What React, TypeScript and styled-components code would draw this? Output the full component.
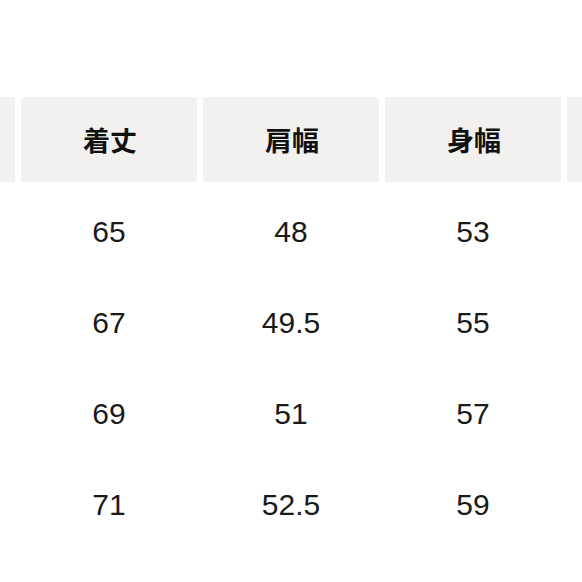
import styled, { createGlobalStyle } from 'styled-components'

const GlobalStyle = createGlobalStyle`
  html, body {
    margin: 0;
    padding: 0;
    background: #ffffff;
  }
  #root {
    width: 582px;
    height: 582px;
    overflow: hidden;
  }
`

const columns = ['', '着丈', '肩幅', '身幅', '']
const rows = [
  ['', '65', '48', '53', ''],
  ['', '67', '49.5', '55', ''],
  ['', '69', '51', '57', ''],
  ['', '71', '52.5', '59', ''],
]

function App() {
  return (
    <>
      <GlobalStyle />
      <Page>
        <Table>
          <HeaderRow>
            {columns.map((c, i) => (
              <HeaderCell key={i}>{c}</HeaderCell>
            ))}
          </HeaderRow>
          {rows.map((r, i) => (
            <DataRow key={i}>
              {r.map((v, j) => (
                <DataCell key={j}>{v}</DataCell>
              ))}
            </DataRow>
          ))}
        </Table>
      </Page>
    </>
  )
}

export default App

const Page = styled.div`
  width: 582px;
  height: 582px;
  background: #ffffff;
  padding-top: 97px;
  box-sizing: border-box;
  overflow: hidden;
`

const Table = styled.div`
  display: flex;
  flex-direction: column;
  margin-left: -161px;
  width: 920px;
`

const HeaderRow = styled.div`
  display: flex;
  gap: 6px;
  height: 85px;
  margin-bottom: 4px;
`

const HeaderCell = styled.div`
  flex: 0 0 176px;
  display: flex;
  align-items: center;
  justify-content: center;
  background: #f2f1f0;
  font-family: "Noto Sans CJK JP", "Noto Sans", sans-serif;
  font-weight: 700;
  font-size: 27px;
  color: #111111;
  padding-left: 2px;
  box-sizing: border-box;
`

const DataRow = styled.div`
  display: flex;
  gap: 6px;
  height: 91px;
`

const DataCell = styled.div`
  flex: 0 0 176px;
  display: flex;
  align-items: center;
  justify-content: center;
  font-family: "Liberation Sans", Arial, sans-serif;
  font-size: 30px;
  color: #1a1a1a;
`
